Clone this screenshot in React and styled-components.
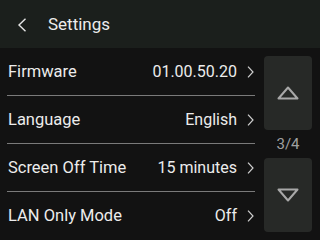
import React from 'react';
import styled, { createGlobalStyle } from 'styled-components';

const Global = createGlobalStyle`
  html, body {
    margin: 0;
    padding: 0;
    background: #121212;
  }
  body {
    font-family: Roboto, "Liberation Sans", sans-serif;
  }
`;

const rows = [
  { label: 'Firmware', value: '01.00.50.20' },
  { label: 'Language', value: 'English' },
  { label: 'Screen Off Time', value: '15 minutes' },
  { label: 'LAN Only Mode', value: 'Off' },
];

export default function App() {
  return (
    <Screen>
      <Global />
      <Header>
        <BackButton>
          <svg width="10" height="14" viewBox="0 0 10 14">
            <polyline points="8.5,0.8 2,7 8.5,13.2" fill="none" stroke="#e6e6e6" strokeWidth="1.4" />
          </svg>
        </BackButton>
        <Title>Settings</Title>
      </Header>
      <Body>
        <List>
          {rows.map((r, i) => (
            <Row key={r.label} last={i === rows.length - 1}>
              <Label>{r.label}</Label>
              <Value>
                {r.value}
                <svg width="7" height="12" viewBox="0 0 7 12">
                  <polyline points="1,0.6 6,6 1,11.4" fill="none" stroke="#cfcfcf" strokeWidth="1.2" />
                </svg>
              </Value>
            </Row>
          ))}
        </List>
        <Pager>
          <PageButton>
            <svg width="22" height="14" viewBox="0 0 22 14">
              <polygon points="11,1.5 20.5,12.5 1.5,12.5" fill="none" stroke="#a8a8a8" strokeWidth="2" strokeLinejoin="round" />
            </svg>
          </PageButton>
          <PageCount>3/4</PageCount>
          <PageButton>
            <svg width="22" height="14" viewBox="0 0 22 14">
              <polygon points="1.5,1.5 20.5,1.5 11,12.5" fill="none" stroke="#a8a8a8" strokeWidth="2" strokeLinejoin="round" />
            </svg>
          </PageButton>
        </Pager>
      </Body>
    </Screen>
  );
}

const Screen = styled.div`
  width: 320px;
  height: 240px;
  display: flex;
  flex-direction: column;
  background: #121212;
  overflow: hidden;
`;

const Header = styled.div`
  height: 48px;
  background: #1b1f1c;
  display: flex;
  align-items: center;
  padding-left: 17px;
  box-sizing: border-box;
`;

const BackButton = styled.div`
  width: 10px;
  height: 14px;
  display: flex;
  margin-right: 21px;
  margin-top: 1px;
`;

const Title = styled.div`
  font-size: 17px;
  color: #ececec;
`;

const Body = styled.div`
  flex: 1;
  display: flex;
`;

const List = styled.div`
  width: 248px;
  margin-left: 7px;
  display: flex;
  flex-direction: column;
`;

const Row = styled.div`
  height: 48px;
  box-sizing: border-box;
  border-bottom: 1px solid ${p => (p.last ? 'transparent' : '#7a7a7a')};
  display: flex;
  align-items: center;
  justify-content: space-between;
  padding: 0 1px 0 1px;
`;

const Label = styled.div`
  font-size: 16.5px;
  color: #ececec;
`;

const Value = styled.div`
  font-size: 16px;
  color: #ececec;
  display: flex;
  align-items: center;
  gap: 10px;
`;

const Pager = styled.div`
  width: 48px;
  margin-left: 9px;
  padding: 8px 0 8px;
  box-sizing: border-box;
  display: flex;
  flex-direction: column;
`;

const PageButton = styled.div`
  flex: 1;
  background: #272927;
  border-radius: 4px;
  display: flex;
  align-items: center;
  justify-content: center;
`;

const PageCount = styled.div`
  height: 28px;
  display: flex;
  align-items: center;
  justify-content: center;
  font-size: 15px;
  color: #a0a0a0;
`;
